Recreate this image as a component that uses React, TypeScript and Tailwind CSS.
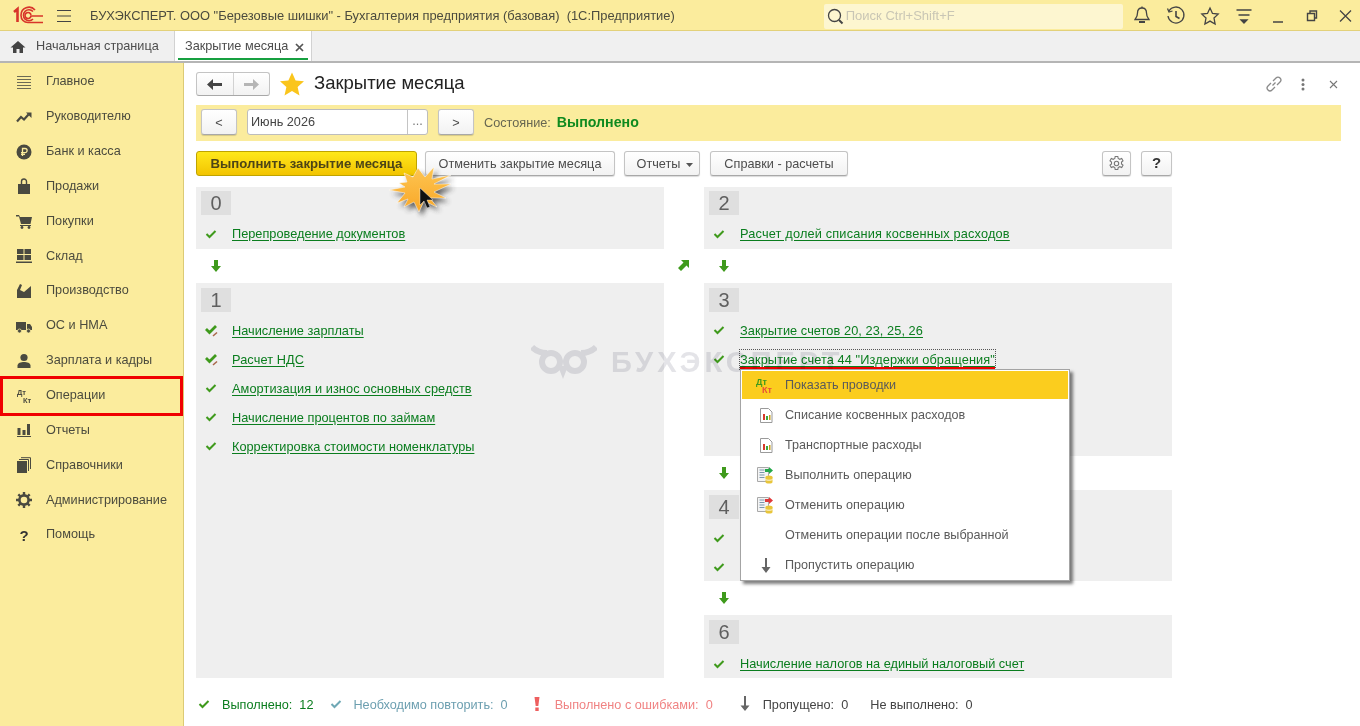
import type { ReactNode } from "react";

const font = "font-['Liberation_Sans',Arial,sans-serif]";

const Svg = ({ children, w = 16, h = 16, className = "" }: { children: ReactNode; w?: number; h?: number; className?: string }) => (
  <svg width={w} height={h} viewBox={`0 0 ${w} ${h}`} className={`shrink-0 ${className}`}>
    {children}
  </svg>
);

const sideItems: { label: string; icon: ReactNode }[] = [
  {
    label: "Главное",
    icon: (
      <g stroke="#6b6a55" strokeWidth="1">
        <path d="M1 2.5h14M1 5.5h14M1 8.5h14M1 11.5h14M1 14.5h14" />
      </g>
    ),
  },
  {
    label: "Руководителю",
    icon: (
      <>
        <path d="M1 12.5l4-4.500 3 2.500 4.500-5" fill="none" stroke="#4a4a40" strokeWidth="2.2" />
        <path d="M10 3.500h5.500V9z" fill="#4a4a40" />
      </>
    ),
  },
  {
    label: "Банк и касса",
    icon: (
      <>
        <circle cx="8" cy="8" r="7.5" fill="#4a4a40" />
        <path d="M6.5 12V4.5h2.5a2 2 0 010 4.2H5M5 10.3h4" fill="none" stroke="#fbec9d" strokeWidth="1.3" />
      </>
    ),
  },
  {
    label: "Продажи",
    icon: (
      <>
        <path d="M2 6h12v10H2z" fill="#4a4a40" />
        <path d="M5.5 8V3.5a2.5 2.5 0 015 0V8" fill="none" stroke="#4a4a40" strokeWidth="1.4" />
      </>
    ),
  },
  {
    label: "Покупки",
    icon: (
      <>
        <path d="M0 2h3l1 2h12l-1.5 7H5L3 3.5H0z" fill="#4a4a40" />
        <path d="M4 12h11v1H4z" fill="#4a4a40" />
        <circle cx="6" cy="14.5" r="1.4" fill="#4a4a40" />
        <circle cx="13" cy="14.5" r="1.4" fill="#4a4a40" />
      </>
    ),
  },
  {
    label: "Склад",
    icon: <path d="M1 1h6.500v5H1zM8.500 1H15v5H8.500zM1 7h6.500v5H1zM8.500 7H15v5H8.500zM0 13.500h16V15H0z" fill="#4a4a40" />,
  },
  { label: "Производство", icon: <path d="M1 15V7l3-6 2 1-2 5 4 2 7-6v12z" fill="#4a4a40" /> },
  {
    label: "ОС и НМА",
    icon: (
      <>
        <path d="M0 4h10v8H0zM11 6h3l2 3v3h-5z" fill="#4a4a40" />
        <circle cx="3.5" cy="13" r="2" fill="#4a4a40" stroke="#fbec9d" strokeWidth=".7" />
        <circle cx="12.5" cy="13" r="2" fill="#4a4a40" stroke="#fbec9d" strokeWidth=".7" />
      </>
    ),
  },
  {
    label: "Зарплата и кадры",
    icon: (
      <>
        <circle cx="8" cy="4.5" r="3.6" fill="#4a4a40" />
        <path d="M1.5 15v-2.500C1.500 10 5 9 8 9s6.500 1 6.500 3.500V15z" fill="#4a4a40" />
      </>
    ),
  },
  {
    label: "Операции",
    icon: (
      <>
        <text x="1" y="7" fontSize="7.5" fontWeight="700" fill="#4a4a40" fontFamily="Liberation Sans">Дт</text>
        <text x="7" y="15" fontSize="7.5" fontWeight="700" fill="#4a4a40" fontFamily="Liberation Sans">Кт</text>
      </>
    ),
  },
  { label: "Отчеты", icon: <path d="M1.500 6h3v7h-3zM6.500 8h3v5h-3zM11 2h3v11h-3zM1 14h14v1H1z" fill="#4a4a40" /> },
  {
    label: "Справочники",
    icon: (
      <>
        <path d="M1 4h10v12H1z" fill="#4a4a40" />
        <path d="M3 2.500h9.500V14M5 .7h9.500V12" fill="none" stroke="#4a4a40" strokeWidth="1" />
      </>
    ),
  },
  {
    label: "Администрирование",
    icon: (
      <>
        <circle cx="8" cy="8" r="4.600" fill="none" stroke="#4a4a40" strokeWidth="2.600" />
        <path d="M8 0v3M8 13v3M0 8h3M13 8h3M2.300 2.300l2.200 2.200M11.500 11.500l2.200 2.200M13.700 2.300l-2.200 2.200M4.500 11.500l-2.200 2.200" stroke="#4a4a40" strokeWidth="2.400" />
      </>
    ),
  },
  {
    label: "Помощь",
    icon: <text x="3.5" y="14" fontSize="15" fontWeight="700" fill="#333" fontFamily="Liberation Sans">?</text>,
  },
];

const Check = ({ color = "#3f9a1c" }: { color?: string }) => (
  <Svg w={12} h={10}>
    <path d="M1.500 5l3 3 6-6" fill="none" stroke={color} strokeWidth="2" />
  </Svg>
);

const CheckEdit = () => (
  <Svg w={14} h={13}>
    <path d="M1 5l3.500 3.500L11 2" fill="none" stroke="#3f9a1c" strokeWidth="2.800" />
    <path d="M7.500 11.500l4-3.500 1 1-4 3.500z" fill="#a8674a" />
  </Svg>
);

const DownArrow = ({ color = "#3f9a1c" }: { color?: string }) => (
  <Svg w={10} h={12}>
    <path d="M3 0h4v6h3l-5 6-5-6h3z" fill={color} />
  </Svg>
);

const Btn = ({ children, className = "" }: { children: ReactNode; className?: string }) => (
  <div
    className={`flex items-center justify-center rounded-[3px] border border-[#c4c4c4] border-b-[#a8a8a8] bg-gradient-to-b from-white to-[#f2f2f2] text-[12.7px] text-[#4d4d4d] shadow-[0_1px_1px_rgba(0,0,0,0.15)] ${className}`}
  >
    {children}
  </div>
);

const Step = ({ text, edit, track = "" }: { text?: string; edit?: boolean; track?: string }) => (
  <div className="flex h-[29px] items-center pl-[9px]">
    <span className="flex w-[27px]">{edit ? <CheckEdit /> : <Check />}</span>
    {text && <a className={`text-[12.75px] text-[#0a7d1e] underline decoration-[#0a7d1e] underline-offset-2 ${track}`}>{text}</a>}
  </div>
);

const Panel = ({ n, className, children }: { n: string; className: string; children?: ReactNode }) => (
  <div className={`bg-[#efefef] ${className}`}>
    <div className="ml-[5px] flex h-[24px] w-[30px] items-center justify-center bg-[#dfdfdf] text-[20px] leading-none text-[#5f5f5f]">{n}</div>
    {children}
  </div>
);

const ArrowRow = () => (
  <div className="flex h-[34px] items-center pl-[15px]">
    <DownArrow />
  </div>
);

const DocIcon = () => (
  <Svg w={14} h={15}>
    <path d="M1.500 .5h8l3.500 3.500v10.500H1.500z" fill="#fff" stroke="#9a9a9a" />
    <path d="M4 6h2v6H4z" fill="#d63a2a" />
    <path d="M7 8h2v4H7z" fill="#3aa63a" />
    <path d="M10 7h1.500v5H10z" fill="#c8a020" />
  </Svg>
);

const OpIcon = ({ color }: { color: string }) => (
  <Svg w={17} h={17}>
    <path d="M.5 .5h11v14H.5z" fill="#f4f4f4" stroke="#a8a8a8" />
    <path d="M2.500 3h5M2.500 5.500h5M2.500 8h5M2.500 10.500h5" stroke="#7a96ad" />
    <path d="M8 2h4V0l4 3.500L12 7V5H8z" fill={color} />
    <ellipse cx="12" cy="10" rx="3.500" ry="1.600" fill="#e8c53a" />
    <path d="M8.500 10v5c0 1 1.500 1.600 3.500 1.600s3.500-.6 3.500-1.600v-5z" fill="#e8c53a" />
    <path d="M8.500 12.500c1 1 6 1 7 0" fill="none" stroke="#fff" strokeWidth=".8" />
  </Svg>
);

const menuItems: { label: string; icon?: ReactNode; active?: boolean }[] = [
  {
    label: "Показать проводки",
    active: true,
    icon: (
      <Svg w={19} h={17}>
        <text x="0" y="8" fontSize="9" fontWeight="700" fill="#3f9a1c" fontFamily="Liberation Sans">Дт</text>
        <text x="6" y="16" fontSize="9" fontWeight="700" fill="#e8503a" fontFamily="Liberation Sans">Кт</text>
      </Svg>
    ),
  },
  { label: "Списание косвенных расходов", icon: <DocIcon /> },
  { label: "Транспортные расходы", icon: <DocIcon /> },
  { label: "Выполнить операцию", icon: <OpIcon color="#25a84a" /> },
  { label: "Отменить операцию", icon: <OpIcon color="#e0393a" /> },
  { label: "Отменить операции после выбранной" },
  {
    label: "Пропустить операцию",
    icon: (
      <Svg w={12} h={15}>
        <path d="M5 0h2v9h3.500L6 15 1.500 9H5z" fill="#666" />
      </Svg>
    ),
  },
];

const TopIcon = ({ children }: { children: ReactNode }) => (
  <svg width="22" height="22" viewBox="0 0 22 22" fill="none" stroke="#444" strokeWidth="1.3" className="shrink-0">
    {children}
  </svg>
);

const burst = "M36 11L43 20L52 10L50 22L69 18L52 27L69 27L52 35L64 41L48 41L55 50L42 44L37 55L32 45L22 50L26 42L15 46L23 36L7 33L23 30L17 26L25 25L22 16L31 20Z";

export default function App() {
  return (
    <div className={`relative h-[726px] w-[1360px] overflow-hidden bg-white ${font}`}>
      {/* top bar */}
      <header className="flex h-[31px] items-center border-b border-[#e3d17a] bg-[#fbec9d] pt-[2px]">
        <svg width="32" height="20" viewBox="0 0 32 20" fill="none" stroke="#d8342a" className="ml-[12px] shrink-0">
          <path d="M2 6l3.500-3V16" strokeWidth="2.600" />
          <path d="M21 5.500A5.500 5.500 0 1021 13" strokeWidth="1.600" />
          <path d="M23 4A8 8 0 009 9.500c0 4 3 7 7 7h15" strokeWidth="1.600" />
          <path d="M19 9a3 3 0 100 1h12" strokeWidth="1.600" />
        </svg>
        <svg width="16" height="14" viewBox="0 0 16 14" stroke="#444" className="ml-[12px] shrink-0">
          <path d="M1 1.500h14M1 7h14M1 12.500h14" strokeWidth="1.200" />
        </svg>
        <span className="ml-[18px] shrink-0 whitespace-pre text-[12.9px] text-[#4b4b3e]">БУХЭКСПЕРТ. ООО "Березовые шишки" - Бухгалтерия предприятия (базовая)  (1С:Предприятие)</span>
        <div className="ml-[149px] flex h-[25px] w-[299px] shrink-0 items-center rounded-[2px] bg-[#fdf6d0] pl-[3px] text-[13px] text-[#c9c6b5]">
          <svg width="17" height="17" viewBox="0 0 17 17" fill="none" stroke="#444" className="mr-[2px]">
            <circle cx="7.500" cy="7.500" r="6" strokeWidth="1.300" />
            <path d="M12 12l3.500 3.500" strokeWidth="2" />
          </svg>
          Поиск Ctrl+Shift+F
        </div>
        <div className="ml-[8px] flex shrink-0 items-center gap-[12px]">
          <TopIcon>
            <path d="M11 3c-3 0-4.500 2.200-4.500 5 0 4-2 5.500-2.500 6.500h14c-.5-1-2.500-2.500-2.500-6.500 0-2.800-1.500-5-4.500-5z" />
            <path d="M8 17h6" strokeWidth="2" />
            <path d="M11 1.500v1.500" />
          </TopIcon>
          <TopIcon>
            <path d="M4 6a8 8 0 11-1 5" />
            <path d="M2.500 3.500L4 7l3.500-1" />
            <path d="M11 6v5.500l3.500 2" strokeWidth="1.600" />
          </TopIcon>
          <TopIcon>
            <path d="M11 3l2.500 5.400 5.700.7-4.200 4 1.100 5.900-5.100-2.900-5.100 2.900 1.100-5.900-4.200-4 5.700-.7z" />
          </TopIcon>
          <TopIcon>
            <path d="M3.500 5h15M5.500 10h11" />
            <path d="M8 15h6l-3 3z" fill="#444" />
          </TopIcon>
          <TopIcon>
            <path d="M6 17h10" strokeWidth="1.500" />
          </TopIcon>
          <TopIcon>
            <path d="M6.500 8.500h7v7h-7zM9 8V6h6.500v7H14" strokeWidth="1.400" />
          </TopIcon>
          <TopIcon>
            <path d="M5 5.500l11 11M16 5.500l-11 11" strokeWidth="1.300" />
          </TopIcon>
        </div>
      </header>

      {/* tabs */}
      <div className="flex h-[32px] border-b-2 border-[#b5b5b5] bg-[#f0f0f0]">
        <div className="flex w-[175px] items-center border-r border-[#d2d2d2] pl-[10px] pt-[2px] text-[12.7px] text-[#4d4d4d]">
          <svg width="16" height="14" viewBox="0 0 16 14" className="mr-[10px]">
            <path d="M8 1L.5 7.500H3V13h3.500V9h3v4H13V7.500h2.500z" fill="#444" />
          </svg>
          Начальная страница
        </div>
        <div className="relative flex w-[137px] items-center border-r border-[#d2d2d2] bg-white pl-[10px] pt-[2px] text-[12.7px] text-[#4d4d4d]">
          Закрытие месяца
          <svg width="9" height="9" viewBox="0 0 9 9" stroke="#555" strokeWidth="1.700" className="ml-[7px]">
            <path d="M1 1l7 7M8 1L1 8" />
          </svg>
          <span className="absolute bottom-[1px] left-[3px] right-[3px] h-[2px] bg-[#16a040]" />
        </div>
      </div>

      <div className="flex h-[663px]">
        {/* side panel */}
        <nav className="h-full w-[184px] shrink-0 border-r border-[#dccb75] bg-[#fbec9d] pt-[1.5px]">
          {sideItems.map((item) => (
            <div key={item.label} className="relative flex h-[34.85px] items-center pl-[16px] text-[12.7px] text-[#4b4b3e]">
              <span className="mr-[14px] flex w-[16px]">
                <Svg>{item.icon}</Svg>
              </span>
              {item.label}
              {item.label === "Операции" && <span className="absolute -bottom-[3px] -top-[2px] left-0 right-0 border-[3px] border-[#f00000]" />}
            </div>
          ))}
        </nav>

        {/* form */}
        <main className="min-w-0 flex-1 pl-[12px] pr-[19px] pt-[9px]">
          <div className="flex h-[24px] items-center">
            <div className="flex h-[24px] w-[74px] rounded-[3px] border border-[#c4c4c4] border-b-[#a8a8a8] bg-gradient-to-b from-white to-[#f2f2f2]">
              <div className="flex flex-1 items-center justify-center border-r border-[#d2d2d2]">
                <svg width="15" height="11" viewBox="0 0 15 11"><path d="M6 0v4h9v3H6v4L0 5.500z" fill="#444" /></svg>
              </div>
              <div className="flex flex-1 items-center justify-center">
                <svg width="15" height="11" viewBox="0 0 15 11"><path d="M9 0v4H0v3h9v4l6-5.500z" fill="#b5b5b5" /></svg>
              </div>
            </div>
            <svg width="24" height="24" viewBox="0 0 24 23" className="ml-[10px]">
              <path d="M12 0l3.600 8 8.400.8-6.400 5.600 1.900 8.600L12 18.500 4.500 23l1.900-8.600L0 8.800 8.400 8z" fill="#fac51c" />
            </svg>
            <h1 className="ml-[10px] -translate-y-[1px] text-[18.5px] text-[#222]">Закрытие месяца</h1>
            <div className="ml-auto flex items-center pr-[3px]">
              <svg width="18" height="18" viewBox="0 0 18 18" fill="none" stroke="#8a8a8a" strokeWidth="1.300">
                <path d="M7.500 10.500l3-3M6 8l-3 3a2.800 2.800 0 004 4l3-3M12 10l3-3a2.800 2.800 0 00-4-4L8 6" />
              </svg>
              <svg width="4" height="13" viewBox="0 0 4 13" fill="#777" className="ml-[18px]">
                <circle cx="2" cy="2" r="1.500" />
                <circle cx="2" cy="6.500" r="1.500" />
                <circle cx="2" cy="11" r="1.500" />
              </svg>
              <svg width="9" height="9" viewBox="0 0 9 9" stroke="#777" strokeWidth="1.100" className="ml-[24px]">
                <path d="M1 1l7 7M8 1L1 8" />
              </svg>
            </div>
          </div>

          <div className="mt-[9px] flex h-[36px] items-start bg-[#fbec9d] pl-[5px] pt-[4px] text-[12.7px]">
            <Btn className="h-[26px] w-[36px] pt-[3px]">&lt;</Btn>
            <div className="ml-[10px] flex h-[26px] w-[181px] rounded-[3px] border border-[#bdbdbd] bg-white">
              <span className="flex flex-1 items-center pl-[3px] pt-[2px] text-[#444]">Июнь 2026</span>
              <span className="flex w-[20px] items-center justify-center border-l border-[#c4c4c4] text-[#777]">...</span>
            </div>
            <Btn className="ml-[10px] h-[26px] w-[36px] pt-[3px]">&gt;</Btn>
            <span className="ml-[10px] flex h-[26px] items-center pt-[3px] text-[#666651]">Состояние:</span>
            <span className="ml-[6px] flex h-[26px] items-center pt-[2px] text-[14.2px] font-bold text-[#0f8a1f]">Выполнено</span>
          </div>

          <div className="mt-[10px] flex h-[25px] w-[976px] items-stretch">
            <div className="flex w-[221px] items-center justify-center rounded-[3px] border border-[#bfa400] bg-gradient-to-b from-[#ffe81a] to-[#f2c400] text-[13.2px] font-bold text-[#4d4516]">
              Выполнить закрытие месяца
            </div>
            <Btn className="ml-[8px] w-[190px] pt-[2px] text-[12.6px]">Отменить закрытие месяца</Btn>
            <Btn className="ml-[9px] w-[76px] pl-[6px] pt-[2px]">
              Отчеты
              <svg width="7" height="4" viewBox="0 0 7 4" className="ml-[6px]"><path d="M0 0h7L3.500 4z" fill="#555" /></svg>
            </Btn>
            <Btn className="ml-[10px] w-[138px] pt-[2px]">Справки - расчеты</Btn>
            <Btn className="ml-auto w-[29px]">
              <svg width="17" height="17" viewBox="0 0 17 17" fill="none" stroke="#777" strokeWidth="1.100">
                <circle cx="8.500" cy="8.500" r="2.200" />
                <path d="M7.200 1.500h2.600l.4 2 1.600.8 1.900-.8 1.300 2.300-1.500 1.300v1.800l1.500 1.300-1.300 2.300-1.900-.8-1.600.8-.4 2H7.200l-.4-2-1.600-.8-1.900.8L2 10.200l1.500-1.300V7.100L2 5.800l1.300-2.300 1.900.8 1.600-.8z" />
              </svg>
            </Btn>
            <Btn className="ml-[10px] w-[31px] text-[15px] font-bold text-[#333]">?</Btn>
          </div>

          <div className="mt-[11px] grid grid-cols-[468px_40px_468px]">
            <div>
              <Panel n="0" className="h-[62px] pt-[4px]">
                <div className="pt-[4px]"><Step text="Перепроведение документов" /></div>
              </Panel>
              <ArrowRow />
              <Panel n="1" className="h-[395px] pt-[5px]">
                <div className="pt-[3.75px]">
                  <Step text="Начисление зарплаты" edit />
                  <Step text="Расчет НДС" edit track="tracking-[0.1px]" />
                  <Step text="Амортизация и износ основных средств" track="tracking-[0.08px]" />
                  <Step text="Начисление процентов по займам" />
                  <Step text="Корректировка стоимости номенклатуры" />
                </div>
              </Panel>
            </div>
            <div className="flex justify-center pt-[73px]">
              <svg width="11" height="11" viewBox="0 0 11 11" className="-ml-[1px]">
                <path d="M11 0v8L8.500 5.500 3 11 0 8l5.500-5.500L3 0z" fill="#3f9a1c" />
              </svg>
            </div>
            <div>
              <Panel n="2" className="h-[62px] pt-[4px]">
                <div className="pt-[4px]"><Step text="Расчет долей списания косвенных расходов" track="tracking-[0.17px]" /></div>
              </Panel>
              <ArrowRow />
              <Panel n="3" className="h-[173px] pt-[5px]">
                <div className="pt-[3.75px]">
                  <Step text="Закрытие счетов 20, 23, 25, 26" track="tracking-[0.07px]" />
                  <div className="flex h-[29px] items-center pl-[9px]">
                    <span className="flex w-[27px]"><Check /></span>
                    <a className="relative text-[12.75px] tracking-[0.1px] text-[#0a7d1e] underline underline-offset-2 outline-1 outline-dotted outline-[#555]">
                      Закрытие счета 44 "Издержки обращения"
                      <span className="absolute bottom-0 left-0 right-0 h-[2px] bg-[#f00000]" />
                    </a>
                  </div>
                </div>
              </Panel>
              <ArrowRow />
              <Panel n="4" className="h-[91px] pt-[5px]">
                <div className="pt-[4px]">
                  <Step />
                  <Step />
                </div>
              </Panel>
              <ArrowRow />
              <Panel n="6" className="h-[63px] pt-[5px]">
                <div className="pt-[5px]"><Step text="Начисление налогов на единый налоговый счет" /></div>
              </Panel>
            </div>
          </div>

          <div className="mt-[18px] flex items-center pl-[2px] text-[12.7px]">
            <span className="-translate-y-[2px]"><Check color="#3f9a1c" /></span>
            <span className="ml-[12px] text-[#0a7d1e]">Выполнено:&nbsp; 12</span>
            <span className="ml-[17px] -translate-y-[2px]"><Check color="#6fa8b5" /></span>
            <span className="ml-[11px] text-[#6c9fb0]">Необходимо повторить:&nbsp; 0</span>
            <svg width="6" height="14" viewBox="0 0 6 14" className="ml-[26px] -translate-y-[2px]"><path d="M.5 0h5L4.300 9H1.700zM1.300 10.500h3.400V14H1.300z" fill="#ee5f5f" /></svg>
            <span className="ml-[15px] text-[#f08383]">Выполнено с ошибками:&nbsp; 0</span>
            <svg width="10" height="15" viewBox="0 0 10 15" className="ml-[27px] -translate-y-[2px]"><path d="M4 0h2v9.500h3.500L5 15 .5 9.500H4z" fill="#666" /></svg>
            <span className="ml-[13px] text-[#444]">Пропущено:&nbsp; 0</span>
            <span className="ml-[22px] text-[#444]">Не выполнено:&nbsp; 0</span>
          </div>
        </main>
      </div>

      {/* watermark */}
      <div className="pointer-events-none absolute left-[531px] top-[344px] flex items-center text-[#e4e4e8] mix-blend-multiply">
        <svg width="66" height="36" viewBox="0 0 66 36" fill="none" stroke="#e4e4e8" strokeWidth="6">
          <circle cx="20" cy="18" r="9" />
          <circle cx="44" cy="18" r="9" />
          <path d="M1 3c4 4 9 6 15 6M65 3c-4 4-9 6-15 6" />
          <path d="M27 22l5 13 5-13" fill="#e4e4e8" stroke="none" />
        </svg>
        <span className="ml-[14px] text-[29px] font-bold leading-none tracking-[4px]">БУХЭКСПЕРТ</span>
      </div>

      {/* context menu */}
      <div className="absolute left-[740px] top-[369px] h-[212px] w-[330px] border border-[#a4a4a4] bg-white px-[1px] pt-[1px] shadow-[3px_3px_3px_rgba(0,0,0,0.5)]">
        {menuItems.map((m) => (
          <div key={m.label} className="flex h-[30px] items-center pb-[2px] text-[12.6px] text-[#5a5a5a]">
            <div className={`flex h-[28px] w-full items-center ${m.active ? "bg-[#fbcd1e]" : ""}`}>
              <span className="flex w-[43px] justify-center pl-[4px]">{m.icon}</span>
              {m.label}
            </div>
          </div>
        ))}
      </div>

      {/* click burst */}
      <svg width="80" height="64" viewBox="0 0 80 64" className="absolute left-[382px] top-[157px]">
        <defs>
          <filter id="sh" x="-20%" y="-20%" width="150%" height="150%">
            <feGaussianBlur stdDeviation="2.500" />
          </filter>
          <linearGradient id="org" x1="0" y1="0" x2="0" y2="1">
            <stop offset="0" stopColor="#fdc552" />
            <stop offset="1" stopColor="#f9a727" />
          </linearGradient>
        </defs>
        <path transform="translate(3 4)" filter="url(#sh)" fill="#333" opacity=".75" d={burst} />
        <path fill="url(#org)" stroke="#fff" strokeWidth=".5" d={burst} />
        <path d="M38 31v17l4-4 3 7 3-1-3-7h6z" fill="#111" stroke="#fff" strokeWidth=".4" />
      </svg>
    </div>
  );
}
